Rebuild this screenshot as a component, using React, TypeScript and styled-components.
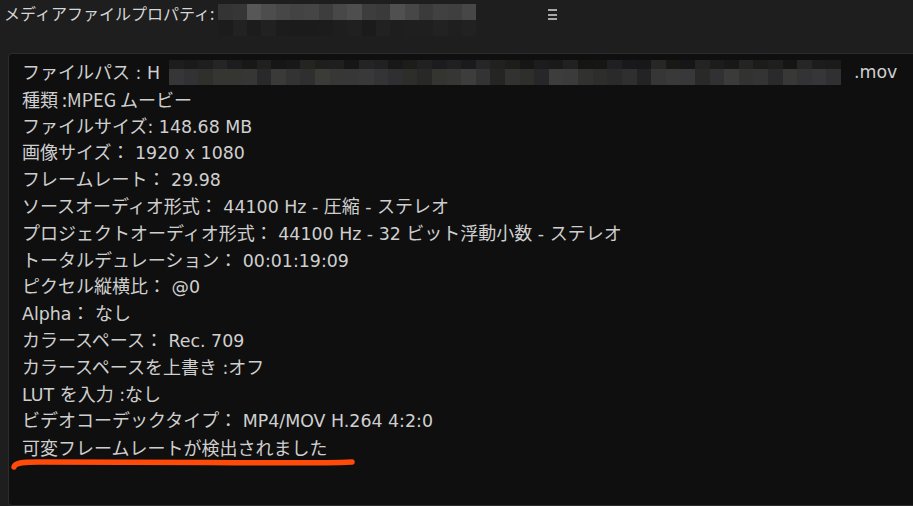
import React from 'react';
import styled, { createGlobalStyle } from 'styled-components';

const GlobalStyle = createGlobalStyle`
	html, body {
		margin: 0;
		padding: 0;
		background: #1e1e1e;
		overflow: hidden;
	}
	body {
		font-family: "Noto Sans CJK JP", sans-serif;
	}
`;

const Page = styled.main`
	width: 913px;
	height: 506px;
	display: flex;
	flex-direction: column;
	overflow: hidden;
`;

const TitleBar = styled.header`
	flex: 0 0 auto;
	height: 53px;
	display: flex;
	align-items: flex-start;
	padding: 4px 0 0 4px;
	box-sizing: border-box;
`;

const Title = styled.h1`
	margin: 0;
	font-weight: 400;
	font-size: 16px;
	line-height: 19px;
	color: #d6d6d6;
	font-family: "Noto Sans CJK JP", sans-serif;
	white-space: nowrap;
`;

const MenuButton = styled.button`
	margin: 5px 0 0 72px;
	padding: 0;
	width: 9px;
	height: 11px;
	border: none;
	background: none;
	display: flex;
	flex-direction: column;
	justify-content: space-between;

	span {
		display: block;
		height: 2px;
		background: #a8a8a8;
	}
`;

const Panel = styled.section`
	flex: 1;
	margin-left: 8px;
	margin-right: -12px;
	background: #0f0f0f;
	border: 1px solid #2c2c2c;
	border-radius: 4px;
	padding: 5px 0 0 13px;
	position: relative;
`;

const Line = styled.div`
	font-size: 18px;
	line-height: 26.8px;
	height: 26.8px;
	color: #cfcfcf;
	white-space: pre;
	display: flex;
	align-items: center;
	font-family: "Noto Sans CJK JP", sans-serif;
`;

// latin runs are set a touch smaller than the kana around them
const Latin = styled.span`
	font-family: "DejaVu Sans", "Noto Sans CJK JP", sans-serif;
	font-size: 17.4px;
`;

const Grid = styled.div<{ $width: number }>`
	display: flex;
	flex-direction: column;
	width: ${p => p.$width}px;
	flex: 0 0 auto;
`;

const Row = styled.div<{ $height: number }>`
	display: flex;
	height: ${p => p.$height}px;
`;

const Cell = styled.div`
	flex: 1;
`;

const Underline = styled.svg`
	position: absolute;
	left: 0;
	top: 401px;
	pointer-events: none;
`;

const Spacer = styled.span<{ $w: number }>`
	display: inline-block;
	width: ${p => p.$w}px;
	flex: 0 0 auto;
`;

// small seeded generator so the pixelated blocks stay the same between renders
const rng = (seed: number) => () => {
	seed |= 0;
	seed = (seed + 0x6d2b79f5) | 0;
	let t = Math.imul(seed ^ (seed >>> 15), 1 | seed);
	t = (t + Math.imul(t ^ (t >>> 7), 61 | t)) ^ t;
	return ((t ^ (t >>> 14)) >>> 0) / 4294967296;
};

type Band = { height: number; min: number; max: number; tint?: boolean };

const Mosaic = ({ width, cols, bands, seed }: { width: number; cols: number; bands: Band[]; seed: number }) => {
	const next = rng(seed);
	return (
		<Grid $width={width}>
			{bands.map((band, r) => (
				<Row key={r} $height={band.height}>
					{Array.from({ length: cols }, (_, c) => {
						const v = Math.round(band.min + (band.max - band.min) * next());
						const b = band.tint ? v + Math.round((next() - 0.5) * 6) : v;
						return <Cell key={c} style={{ backgroundColor: `rgb(${v},${v},${b})` }} />;
					})}
				</Row>
			))}
		</Grid>
	);
};

const Mixed = ({ text }: { text: string }) => (
	<span>
		{text.split(/([\x20-\x7e]+)/).map((run, i) =>
			i % 2 ? <Latin key={i}>{run}</Latin> : run
		)}
	</span>
);

const props: { label: string; plain?: boolean }[] = [
	{ label: '種類 :MPEG ムービー', plain: true },
	{ label: 'ファイルサイズ: 148.68 MB' },
	{ label: '画像サイズ： 1920 x 1080' },
	{ label: 'フレームレート： 29.98' },
	{ label: 'ソースオーディオ形式： 44100 Hz - 圧縮 - ステレオ' },
	{ label: 'プロジェクトオーディオ形式： 44100 Hz - 32 ビット浮動小数 - ステレオ' },
	{ label: 'トータルデュレーション： 00:01:19:09' },
	{ label: 'ピクセル縦横比： @0' },
	{ label: 'Alpha： なし' },
	{ label: 'カラースペース： Rec. 709' },
	{ label: 'カラースペースを上書き :オフ' },
	{ label: 'LUT を入力 :なし' },
	{ label: 'ビデオコーデックタイプ： MP4/MOV H.264 4:2:0' },
	{ label: '可変フレームレートが検出されました' },
];

export default function App() {
	return (
		<>
			<GlobalStyle />
			<Page>
				<TitleBar>
					<Title>メディアファイルプロパティ:</Title>
					<Spacer $w={4} />
					<Mosaic
						width={258}
						cols={18}
						seed={7}
						bands={[
							{ height: 16, min: 52, max: 88 },
							{ height: 16, min: 26, max: 34 },
						]}
					/>
					<MenuButton aria-label="menu">
						<span />
						<span />
						<span />
					</MenuButton>
				</TitleBar>
				<Panel>
					<Line>
						<Mixed text="ファイルパス : H" />
						<Spacer $w={9} />
						<Mosaic
							width={672}
							cols={46}
							seed={21}
							bands={[
								{ height: 9, min: 20, max: 40, tint: true },
								{ height: 16, min: 34, max: 62, tint: true },
							]}
						/>
						<Spacer $w={13} />
						<Latin>.mov</Latin>
					</Line>
					{props.map(p => (
						<Line key={p.label}>{p.plain ? p.label : <Mixed text={p.label} />}</Line>
					))}
					<Underline width="360" height="16" viewBox="0 0 360 16">
						<path
							d="M5 12 C 6 8, 12 7, 30 7 L 200 7.5 C 260 8, 320 8, 343 7"
							fill="none"
							stroke="#ff4a0a"
							strokeWidth="5.5"
							strokeLinecap="round"
						/>
					</Underline>
				</Panel>
			</Page>
		</>
	);
}
